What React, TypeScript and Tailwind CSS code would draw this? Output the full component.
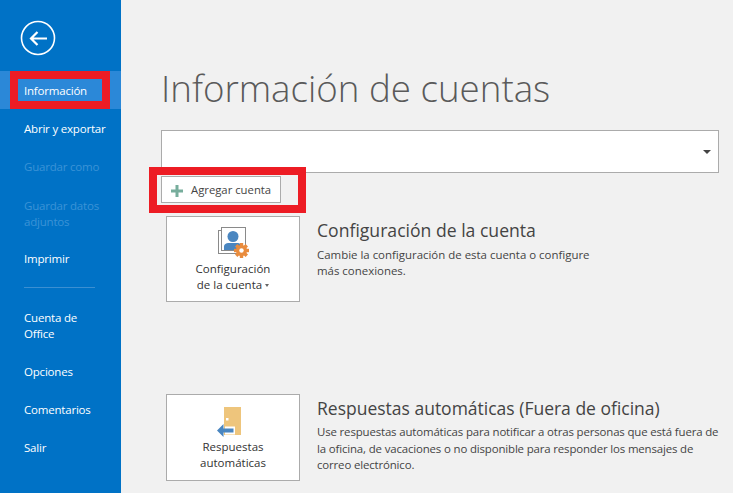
const sans = 'font-["Open_Sans","Noto_Sans",sans-serif]';

function BackIcon() {
  return (
    <svg width="36" height="36" viewBox="0 0 36 36" fill="none" stroke="#fff">
      <circle cx="18" cy="18" r="16.5" strokeWidth="1.6" />
      <path d="M27 18.5H11M17.5 12l-6.5 6.5 6.5 6.5" strokeWidth="2.2" />
    </svg>
  );
}

function MenuItem({ label, active, disabled, className }: { label: string; active?: boolean; disabled?: boolean; className?: string }) {
  return (
    <div
      className={`flex items-center pl-6 text-[11.5px] tracking-[-0.2px] leading-4 ${className ?? 'h-[38px] pt-[2px] pr-2'} ${active ? 'bg-[#2b88d8]' : ''} ${disabled ? 'text-[#3b93d6]' : 'text-white'}`}
    >
      {label}
    </div>
  );
}

function Sidebar() {
  return (
    <aside className="w-[121px] shrink-0 h-full bg-[#0072c6] flex flex-col">
      <div className="h-[71px] pl-[20px] pt-[20px]">
        <BackIcon />
      </div>
      <MenuItem label="Información" active />
      <MenuItem label="Abrir y exportar" />
      <MenuItem label="Guardar como" disabled />
      <MenuItem label="Guardar datos adjuntos" disabled className="h-[54px] pt-[4px] pr-2" />
      <MenuItem label="Imprimir" />
      <div className="mt-[10px] mb-[12px] ml-6 w-[71px] h-px bg-[#3b8fd2]" />
      <MenuItem label="Cuenta de Office" className="h-[52px] pr-[30px]" />
      <MenuItem label="Opciones" />
      <MenuItem label="Comentarios" />
      <MenuItem label="Salir" />
    </aside>
  );
}

function SettingsIcon() {
  return (
    <svg width="32" height="32" viewBox="0 0 32 32" className="ml-[2px] -mb-[1px]">
      <rect x="0.5" y="3.5" width="24" height="23" fill="none" stroke="#8a8a8a" />
      <rect x="3.5" y="0.5" width="24" height="23" fill="#fff" stroke="#8a8a8a" />
      <circle cx="15" cy="9.5" r="5.5" fill="#4a86c0" />
      <path d="M6 23v-3c0-3 2-4 5-4h8c3 0 4 1 4 4v3z" fill="#4a86c0" />
      <g fill="#e98c3e">
        <circle cx="23.5" cy="23.5" r="5.5" />
        <rect x="21.8" y="16" width="3.4" height="15" />
        <rect x="16" y="21.8" width="15" height="3.4" />
        <rect x="21.8" y="16" width="3.4" height="15" transform="rotate(45 23.5 23.5)" />
        <rect x="21.8" y="16" width="3.4" height="15" transform="rotate(-45 23.5 23.5)" />
      </g>
      <circle cx="23.5" cy="23.5" r="2.2" fill="#fff" />
    </svg>
  );
}

function AutoReplyIcon() {
  return (
    <svg width="32" height="32" viewBox="0 0 32 32" className="-mb-[1px]">
      <rect x="7" y="2" width="17" height="28" fill="#eec57c" />
      <rect x="9" y="13" width="2.5" height="2.5" fill="#fff" />
      <rect x="8" y="21.5" width="10" height="8" fill="#fff" />
      <path d="M0 25.5l6.5-6.5v4.5h10v4h-10V32z" fill="#4a86c0" />
    </svg>
  );
}

function Tile({ children, icon, h }: { children: React.ReactNode; icon: React.ReactNode; h: string }) {
  return (
    <div className={`w-[134px] ${h} shrink-0 bg-white border border-[#ababab] flex flex-col items-center pt-[10px] text-[11.5px] leading-4 text-[#333] text-center`}>
      {icon}
      <div className="mt-[3px]">{children}</div>
    </div>
  );
}

function Main() {
  return (
    <main className="flex-1 relative pl-[40px] pr-[14px] min-w-0">
      <h1 className="pt-[60px] h-[130px] text-[36.7px] leading-[56px] font-light text-[#5a5a5a] whitespace-nowrap">Información de cuentas</h1>

      <div className="h-[43px] bg-white border border-[#ababab] flex items-center justify-end pr-[7px]">
        <div className="w-0 h-0 border-x-[4px] border-x-transparent border-t-[4px] border-t-[#444]" />
      </div>

      <div className="mt-[3px] w-[120px] h-[27px] pt-[2px] bg-white border border-[#ababab] flex items-center pl-[9px] text-[11.3px] text-[#444]">
        <svg width="12" height="12" viewBox="0 0 12 12" className="mr-[8px]">
          <path d="M4.5 0h3v4.5H12v3H7.5V12h-3V7.5H0v-3h4.5z" fill="#77ad9c" />
        </svg>
        Agregar cuenta
      </div>

      <section className="mt-[13px] ml-[5px] flex">
        <Tile h="h-[86px]" icon={<SettingsIcon />}>
          <span>Configuración</span>
          <br />
          <span>de la cuenta <span className="inline-block align-middle w-0 h-0 border-x-[2.5px] border-x-transparent border-t-[3px] border-t-[#666]" /></span>
        </Tile>
        <div className="ml-[17px] text-[#444]">
          <h2 className="text-[17.6px] leading-7 text-[#444]">Configuración de la cuenta</h2>
          <p className="mt-[3px] text-[11.45px] leading-[15.5px] w-[290px]">Cambie la configuración de esta cuenta o configure más conexiones.</p>
        </div>
      </section>

      <section className="mt-[92px] ml-[5px] flex">
        <Tile h="h-[87px]" icon={<AutoReplyIcon />}>
          <span>Respuestas</span>
          <br />
          <span>automáticas</span>
        </Tile>
        <div className="ml-[17px] text-[#444] min-w-0">
          <h2 className="text-[17.5px] leading-7 whitespace-nowrap">Respuestas automáticas (Fuera de oficina)</h2>
          <p className="mt-[2px] text-[11.45px] tracking-[-0.15px] leading-[16.5px] w-[406px]">Use respuestas automáticas para notificar a otras personas que está fuera de la oficina, de vacaciones o no disponible para responder los mensajes de correo electrónico.</p>
        </div>
      </section>
    </main>
  );
}

export default function App() {
  return (
    <div className={`relative w-[733px] h-[493px] overflow-hidden flex bg-[#f1f1f1] ${sans}`}>
      <Sidebar />
      <Main />
      {/* red annotation boxes drawn over the screenshot */}
      <div className="absolute left-[10px] top-[71px] w-[100px] h-[38px] border-[8px] border-[#ed1c24]" />
      <div className="absolute left-[149px] top-[167px] w-[157px] h-[46px] border-[8px] border-[#ed1c24]" />
    </div>
  );
}
